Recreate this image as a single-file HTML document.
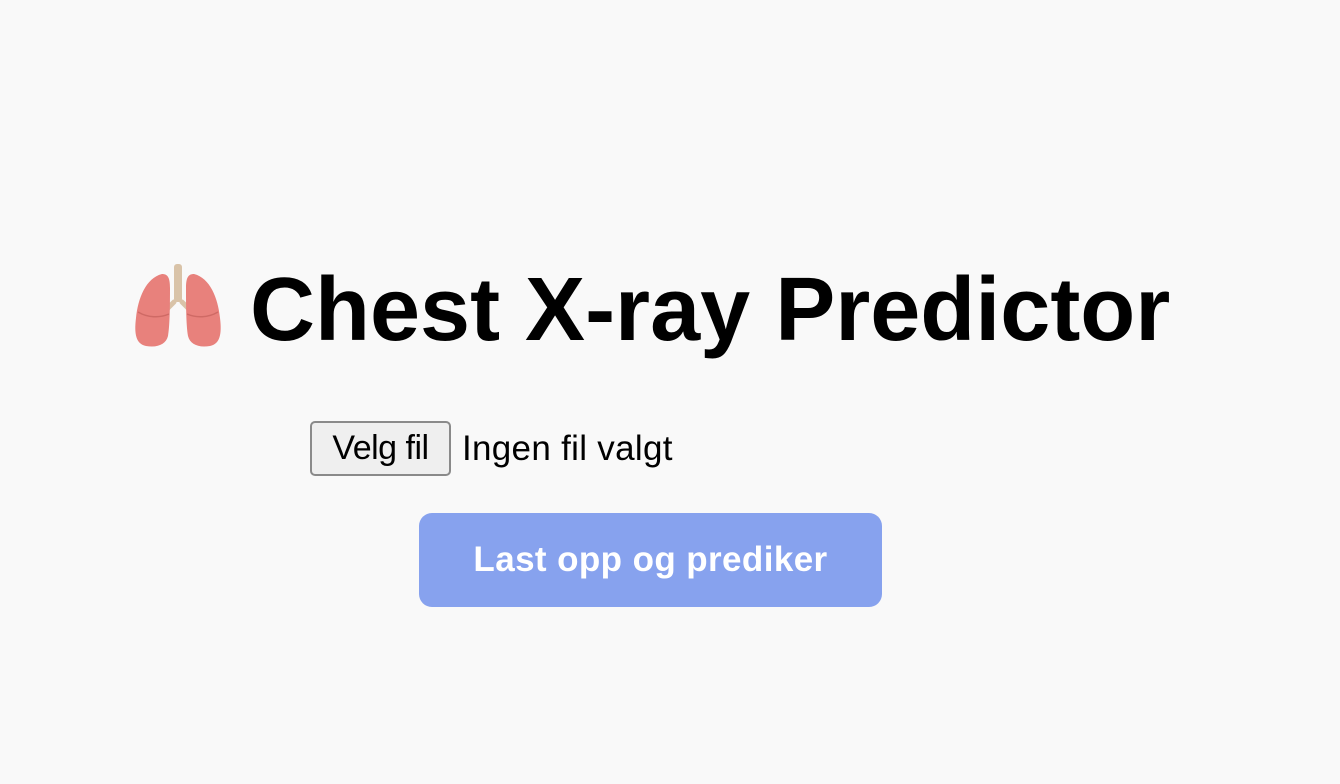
<!DOCTYPE html>
<html><head><meta charset="utf-8"><style>
html,body{margin:0;padding:0;background:#f9f9f9;width:1340px;height:784px;overflow:hidden;font-family:"Liberation Sans",Arial,sans-serif;}
.t{position:absolute;left:250px;top:260px;font-size:90px;font-weight:bold;color:#000;white-space:nowrap;line-height:100px;}
.fb{position:absolute;left:310px;top:421px;width:141px;height:55px;box-sizing:border-box;border:2px solid #8a8a8a;border-radius:5px;background:#efefef;font-size:34px;line-height:51px;text-align:center;color:#000;letter-spacing:-0.5px;}
.fl{position:absolute;left:462px;top:421px;font-size:35px;line-height:55px;color:#000;white-space:nowrap;letter-spacing:0.3px;}
.bt{position:absolute;left:419px;top:513px;width:463px;height:94px;border-radius:13px;background:#87a2ee;color:#fff;font-weight:bold;font-size:35px;line-height:94px;text-align:center;letter-spacing:0.4px;}
</style></head><body>
<svg style="position:absolute;left:130px;top:262px" width="96" height="88" viewBox="0 0 96 88">
<rect x="44" y="2" width="8" height="38" rx="3" fill="#d9c3a8"/>
<path d="M44 40 L36 48 M52 40 L60 48" stroke="#d9c3a8" stroke-width="5" stroke-linecap="round"/>
<path d="M32 12 C16 16 8 36 6 56 C4 72 6 82 16 84 C28 86 36 82 38 74 C40 62 40 40 40 26 C40 16 38 12 32 12 Z" fill="#e8817c"/>
<path d="M64 12 C80 16 88 36 90 56 C92 72 90 82 80 84 C68 86 60 82 58 74 C56 62 56 40 56 26 C56 16 58 12 64 12 Z" fill="#e8817c"/>
<path d="M8 50 C18 56 30 56 39 52" stroke="#cf6a65" stroke-width="1.5" fill="none"/>
<path d="M88 50 C78 56 66 56 57 52" stroke="#cf6a65" stroke-width="1.5" fill="none"/>
</svg>
<div class="t">Chest X-ray Predictor</div>
<div class="fb">Velg fil</div>
<div class="fl">Ingen fil valgt</div>
<div class="bt">Last opp og prediker</div>
</body></html>
